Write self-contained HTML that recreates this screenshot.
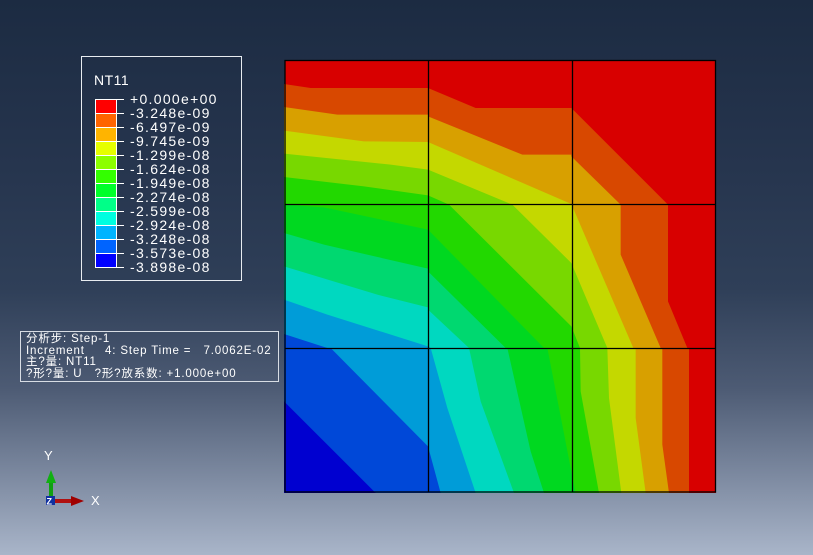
<!DOCTYPE html>
<html><head><meta charset="utf-8"><style>
html,body{margin:0;padding:0}
body{width:813px;height:555px;overflow:hidden;position:relative;font-family:"Liberation Sans","WenQuanYi Zen Hei",sans-serif;
background:linear-gradient(to bottom,#1c2b42 0%,#26354e 30%,#2f3f58 52%,#4d5b74 70%,#7a879e 85%,#a9b5c9 100%);}
.leg{position:absolute;left:81px;top:56px;width:161px;height:225px;border:1px solid #e8ecf0;box-sizing:border-box;color:#fff}
.info{position:absolute;left:20px;top:331px;width:259px;height:51px;border:1px solid #d8dde4;box-sizing:border-box;color:#fff;font-size:11.5px;line-height:11.7px;padding:2px 0 0 5px;white-space:pre;letter-spacing:0.85px}
</style></head><body>
<div class="leg">
<div style="position:absolute;left:12px;top:15px;font-size:14px;letter-spacing:0.5px">NT11</div>
<svg style="position:absolute;left:0;top:0" width="161" height="225">
<g stroke="#fff" stroke-width="1">
<rect x="13.5" y="42.5" width="21" height="14" fill="#ff0000"/>
<rect x="13.5" y="56.5" width="21" height="14" fill="#ff6400"/>
<rect x="13.5" y="70.5" width="21" height="14" fill="#ffb400"/>
<rect x="13.5" y="84.5" width="21" height="14" fill="#e6ff00"/>
<rect x="13.5" y="98.5" width="21" height="14" fill="#8cff00"/>
<rect x="13.5" y="112.5" width="21" height="14" fill="#33ff00"/>
<rect x="13.5" y="126.5" width="21" height="14" fill="#00ff2a"/>
<rect x="13.5" y="140.5" width="21" height="14" fill="#00ff88"/>
<rect x="13.5" y="154.5" width="21" height="14" fill="#00ffe0"/>
<rect x="13.5" y="168.5" width="21" height="14" fill="#00b4ff"/>
<rect x="13.5" y="182.5" width="21" height="14" fill="#0064ff"/>
<rect x="13.5" y="196.5" width="21" height="14" fill="#0000ff"/>
</g>
<g stroke="#fff"><path d="M34 42.5h8M34 56.5h8M34 70.5h8M34 84.5h8M34 98.5h8M34 112.5h8M34 126.5h8M34 140.5h8M34 154.5h8M34 168.5h8M34 182.5h8M34 196.5h8M34 210.5h8"/></g>
<g fill="#fff" font-size="14" font-family="Liberation Sans,sans-serif" letter-spacing="1.3">
<text x="48" y="47">+0.000e+00</text><text x="48" y="61">-3.248e-09</text><text x="48" y="75">-6.497e-09</text><text x="48" y="89">-9.745e-09</text><text x="48" y="103">-1.299e-08</text><text x="48" y="117">-1.624e-08</text><text x="48" y="131">-1.949e-08</text><text x="48" y="145">-2.274e-08</text><text x="48" y="159">-2.599e-08</text><text x="48" y="173">-2.924e-08</text><text x="48" y="187">-3.248e-08</text><text x="48" y="201">-3.573e-08</text><text x="48" y="215">-3.898e-08</text>
</g></svg></div>
<div class="info">分析步: Step-1
Increment     4: Step Time =   7.0062E-02
主?量: NT11
?形?量: U   ?形?放系数: +1.000e+00</div>
<svg style="position:absolute;left:0;top:0" width="813" height="555">
<g transform="translate(284,58) scale(0.33333)">
<rect x="3" y="6" width="1293" height="1299" fill="#d80000"/>
<polygon fill="#d84800" points="0,78 80,90 432,90 575,150 862,150 1150,438 1152,438 1152,730 1210,870 1215,870 1215,1305 0,1305"/>
<polygon fill="#d8a000" points="0,147 160,170 432,170 432,175 715,290 862,290 862,295 1008,438 1010,438 1010,590 1130,870 1135,870 1135,1160 1155,1305 0,1305"/>
<polygon fill="#c4d800" points="0,218 240,250 432,252 862,438 1048,870 1055,870 1055,1080 1085,1305 0,1305"/>
<polygon fill="#78d800" points="0,287 320,320 432,335 685,440 862,615 970,870 975,1020 1012,1305 0,1305"/>
<polygon fill="#22d800" points="0,357 240,385 432,412 495,440 862,805 888,870 890,1000 945,1305 0,1305"/>
<polygon fill="#00d820" points="0,440 120,448 432,515 780,870 790,870 862,1240 875,1305 0,1305"/>
<polygon fill="#00d870" points="0,525 120,560 432,632 432,640 665,870 670,870 740,1180 780,1305 0,1305"/>
<polygon fill="#00d8c0" points="0,625 280,710 432,748 432,755 555,870 590,1030 690,1305 0,1305"/>
<polygon fill="#009cd8" points="0,725 130,770 432,865 440,870 490,1050 575,1305 0,1305"/>
<polygon fill="#0048d8" points="0,828 130,870 140,870 432,1165 470,1305 0,1305"/>
<polygon fill="#0000d0" points="0,1030 275,1305 0,1305"/>
</g>
<g stroke="#000" stroke-width="1.3" fill="none">
<rect x="285" y="60.5" width="430.5" height="431.5"/>
<path d="M428.5 61V492M572.5 61V492M285 204.5H716M285 348.5H716"/>
</g>
<text x="44" y="460" fill="#fff" font-size="13">Y</text>
<text x="91" y="505" fill="#fff" font-size="13">X</text>
<rect x="49" y="482" width="4" height="15" fill="#11a011"/>
<polygon points="51,470 46,483 56,483" fill="#11b011"/>
<rect x="55" y="499" width="16" height="4" fill="#b01010"/>
<polygon points="84,501 71,496 71,506" fill="#a00000"/>
<rect x="46" y="496" width="9" height="9" fill="#1030a0"/>
<text x="46.5" y="504.5" fill="#fff" font-size="9" font-weight="bold">Z</text>
</svg>
</body></html>
